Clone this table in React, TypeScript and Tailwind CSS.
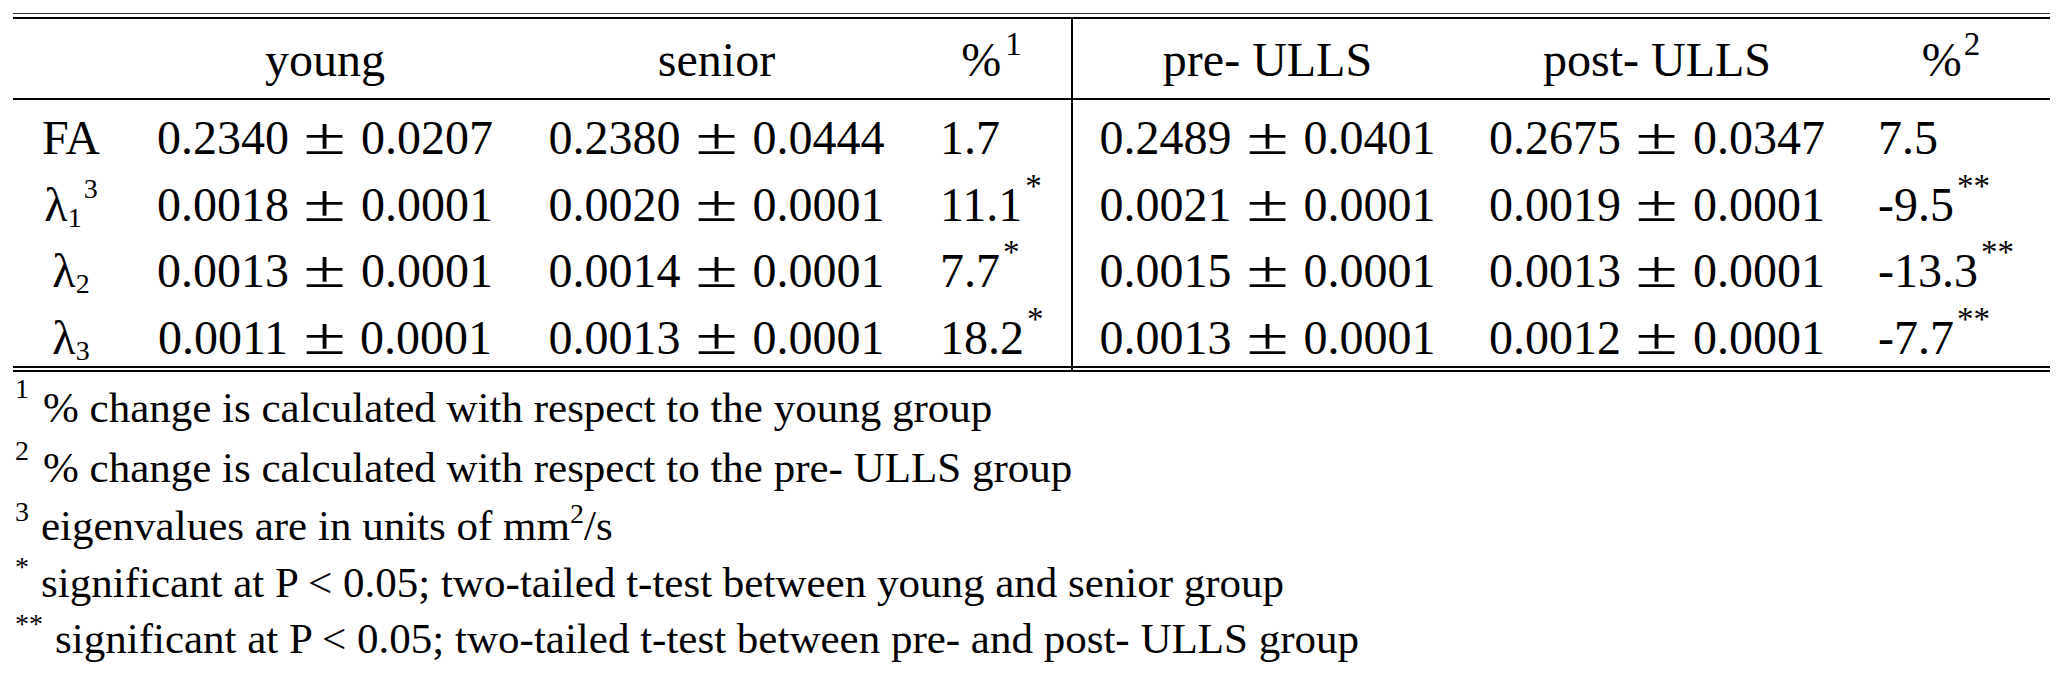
import React from "react";

type Pair = [string, string];
type Row = {
  label: React.ReactNode;
  young: Pair;
  senior: Pair;
  p1: string;
  s1?: string;
  pre: Pair;
  post: Pair;
  p2: string;
  s2?: string;
  h: string;
};

function PM({ v }: { v: Pair }) {
  return (
    <span className="whitespace-nowrap">
      {v[0]}
      <span className="inline-block w-[72px] text-center">
        <span className="inline-block scale-x-[1.45] text-[53px] leading-none">±</span>
      </span>
      {v[1]}
    </span>
  );
}

function Star({ s }: { s?: string }) {
  if (!s) return null;
  return <span className="relative -top-[24px] ml-[3px] text-[33px] leading-none">{s}</span>;
}

function Lambda({ sub, sup }: { sub: string; sup?: string }) {
  return (
    <span>
      λ
      <span className="relative top-[6px] text-[28px] leading-none">{sub}</span>
      {sup ? <span className="relative -top-[23px] ml-[2px] text-[28px] leading-none">{sup}</span> : null}
    </span>
  );
}

const rows: Row[] = [
  {
    label: <span>FA</span>,
    young: ["0.2340", "0.0207"],
    senior: ["0.2380", "0.0444"],
    p1: "1.7",
    pre: ["0.2489", "0.0401"],
    post: ["0.2675", "0.0347"],
    p2: "7.5",
    h: "h-[72px] pt-[5px]",
  },
  {
    label: <Lambda sub="1" sup="3" />,
    young: ["0.0018", "0.0001"],
    senior: ["0.0020", "0.0001"],
    p1: "11.1",
    s1: "*",
    pre: ["0.0021", "0.0001"],
    post: ["0.0019", "0.0001"],
    p2: "-9.5",
    s2: "**",
    h: "h-[66px]",
  },
  {
    label: <Lambda sub="2" />,
    young: ["0.0013", "0.0001"],
    senior: ["0.0014", "0.0001"],
    p1: "7.7",
    s1: "*",
    pre: ["0.0015", "0.0001"],
    post: ["0.0013", "0.0001"],
    p2: "-13.3",
    s2: "**",
    h: "h-[67px]",
  },
  {
    label: <Lambda sub="3" />,
    young: ["0.0011", "0.0001"],
    senior: ["0.0013", "0.0001"],
    p1: "18.2",
    s1: "*",
    pre: ["0.0013", "0.0001"],
    post: ["0.0012", "0.0001"],
    p2: "-7.7",
    s2: "**",
    h: "h-[61px]",
  },
];

const grid = "grid grid-cols-[116px_392px_391px_161px_389px_390px_198px]";

export default function App() {
  return (
    <div className="min-h-[680px] w-[2058px] bg-white pl-[13px] pt-[13px] [font-family:Liberation_Serif,serif] text-black">
      <div className="w-[2037px]">
        <div className="h-px bg-[#333]" />
        <div className="mt-[3px] h-[2px] bg-black" />
        <div className={`${grid} h-[79px] pt-[8px] text-[48px] leading-[66px]`}>
          <div />
          <div className="text-center">young</div>
          <div className="text-center">senior</div>
          <div className="-mt-[8px] border-r-2 border-black pt-[8px] text-center">
            %<span className="relative -top-[21px] ml-[4px] text-[33px] leading-none">1</span>
          </div>
          <div className="text-center">pre- ULLS</div>
          <div className="text-center">post- ULLS</div>
          <div className="text-center">
            %<span className="relative -top-[21px] ml-[2px] text-[33px] leading-none">2</span>
          </div>
        </div>
        <div className="h-[2px] bg-black" />
        {rows.map((r, i) => (
          <div key={i} className={`${grid} ${r.h} text-[48px] leading-[66px]`}>
            <div className="text-center">{r.label}</div>
            <div className="text-center">
              <PM v={r.young} />
            </div>
            <div className="text-center">
              <PM v={r.senior} />
            </div>
            <div className={`border-r-2 border-black pl-[28px] ${i === 0 ? "-mt-[5px] pt-[5px]" : ""}`}>
              {r.p1}
              <Star s={r.s1} />
            </div>
            <div className="text-center">
              <PM v={r.pre} />
            </div>
            <div className="text-center">
              <PM v={r.post} />
            </div>
            <div className="pl-[26px]">
              {r.p2}
              <Star s={r.s2} />
            </div>
          </div>
        ))}
        <div className="h-[2px] bg-black" />
        <div className="mt-[2px] h-[2px] bg-black" />
        <div className="mt-[7px] pl-[2px] text-[43px] leading-[58px]">
          <div className="h-[60px] whitespace-nowrap">
            <span className="relative -top-[24px] inline-block w-[28px] text-[28px] leading-none">1</span>
            % change is calculated with respect to the young group
          </div>
          <div className="h-[58px] whitespace-nowrap">
            <span className="relative -top-[22px] inline-block w-[28px] text-[28px] leading-none">2</span>
            % change is calculated with respect to the pre- ULLS group
          </div>
          <div className="h-[57px] whitespace-nowrap">
            <span className="relative -top-[19px] inline-block w-[26px] text-[28px] leading-none">3</span>
            eigenvalues are in units of mm
            <span className="relative -top-[17px] text-[28px] leading-none">2</span>/s
          </div>
          <div className="h-[56px] whitespace-nowrap">
            <span className="relative -top-[21px] inline-block w-[26px] text-[28px] leading-none">*</span>
            significant at P &lt; 0.05; two-tailed t-test between young and senior group
          </div>
          <div className="h-[58px] whitespace-nowrap">
            <span className="relative -top-[20px] inline-block w-[40px] text-[28px] leading-none">**</span>
            significant at P &lt; 0.05; two-tailed t-test between pre- and post- ULLS group
          </div>
        </div>
      </div>
    </div>
  );
}
